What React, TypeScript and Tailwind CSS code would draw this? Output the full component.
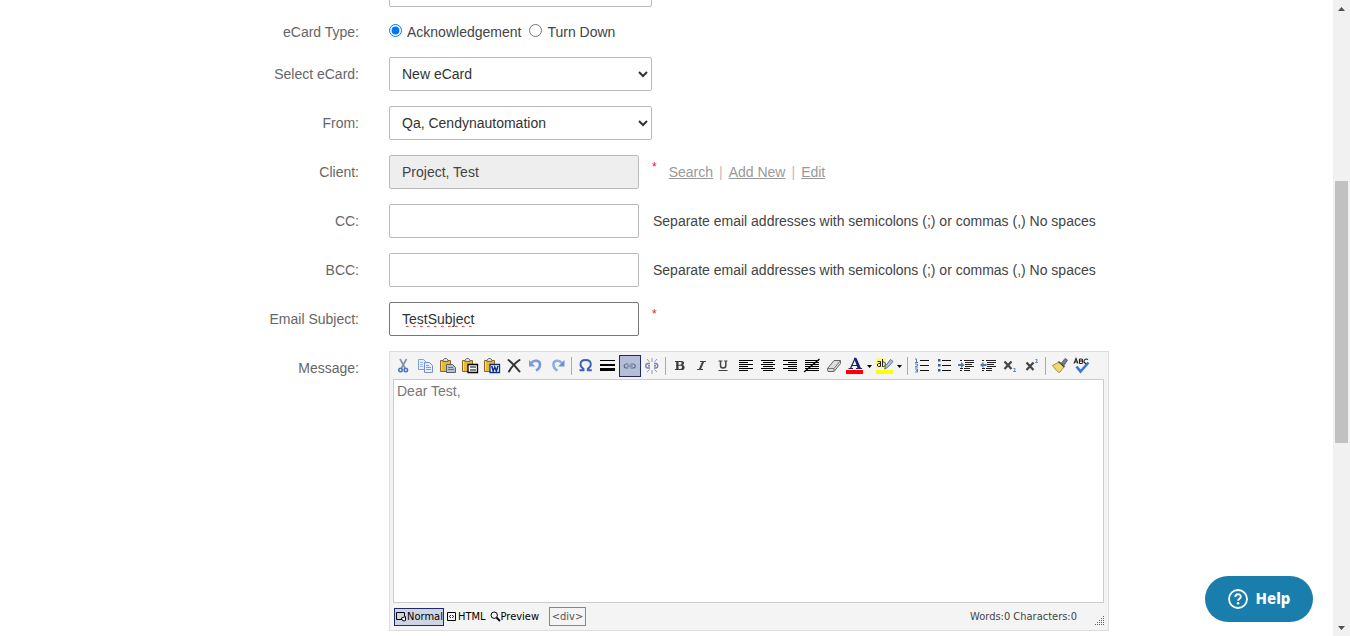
import { useState, type ReactNode } from "react";

const fieldClass =
  "h-[34px] w-[250px] rounded-[2px] border border-[#bbb] bg-white px-3 text-sm text-[#333] outline-none";
const selectClass =
  "h-[34px] w-[263px] rounded-[2px] border border-[#bbb] bg-white px-2 text-sm text-[#333] outline-none";

function Row({ label, htmlFor, children }: { label: string; htmlFor?: string; children: ReactNode }) {
  return (
    <div className="grid grid-cols-4">
      <label htmlFor={htmlFor} className="flex min-h-5 justify-end pr-[15px] pt-[7px] leading-5 text-[#666]">
        {label}
      </label>
      <div className="col-span-3 flex items-center pl-[15px]">{children}</div>
    </div>
  );
}

function Required() {
  return <span className="self-start pl-[13px] pt-1 text-xs leading-4 text-[#e02020]">*</span>;
}

function Tool({
  name,
  children,
  active = false,
}: {
  name: string;
  children: ReactNode;
  active?: boolean;
}) {
  return (
    <button
      type="button"
      title={name}
      aria-label={name}
      className={
        active
          ? "size-[22px] shrink-0 border border-[#1c2a6b] bg-[#b5bed6]"
          : "size-[22px] shrink-0 border border-transparent hover:bg-[#dfe3ee]"
      }
    >
      <svg viewBox="0 0 20 20" className="size-5" fill="none">
        {children}
      </svg>
    </button>
  );
}

function DropArrow({ name }: { name: string }) {
  return (
    <button type="button" aria-label={name} className="flex h-[22px] w-2 shrink-0 items-center">
      <svg viewBox="0 0 5 3" className="h-[3px] w-[5px]">
        <path d="M0 0h5L2.500 3z" fill="#000" />
      </svg>
    </button>
  );
}

function Separator() {
  return (
    <span className="flex w-[6px] shrink-0 pl-0.5">
      <span className="h-[18px] w-px bg-[#aaa]" />
    </span>
  );
}

function Clipboard() {
  return (
    <>
      <path d="M2.500 4.500h10v11h-10z" fill="#e8b83e" stroke="#8a6a20" />
      <path d="M3.500 5.500v9" stroke="#f8dc80" />
      <path d="M5 5.500V4l1.500-1.500h2L10 4v1.500z" fill="#d8d8d8" stroke="#555" strokeWidth=".8" />
    </>
  );
}

function Lines({ rows }: { rows: [number, number][] }) {
  return (
    <>
      {rows.map(([x, w], i) => (
        <rect key={i} x={x} y={4 + i * 2} width={w} height={1} fill="#000" />
      ))}
    </>
  );
}

function ListLines() {
  return <path d="M8 4.500h9M8 9.500h9M8 14.500h9" stroke="#111" />;
}

function IndentLines() {
  return (
    <path
      d="M4 4.500h2M8 4.500h10M9 6.500h9M9 8.500h7M9 10.500h9M4 12.500h3M8 12.500h6M4 14.500h2M8 14.500h6"
      stroke="#222"
      strokeWidth="1.200"
    />
  );
}

function Toolbar() {
  return (
    <div className="flex h-[27px] items-center pl-[3px] pt-px">
      <Tool name="Cut">
        <path d="M6 3l5 9M12.500 3l-5 9" stroke="#8592aa" strokeWidth="1.700" />
        <circle cx="6.500" cy="14" r="1.700" stroke="#4777bd" strokeWidth="1.600" />
        <circle cx="11.800" cy="14" r="1.700" stroke="#4777bd" strokeWidth="1.600" />
      </Tool>
      <Tool name="Copy">
        <path d="M2.500 3.500h5l3 3v7h-8z" fill="#e6eefb" stroke="#7f9fd3" />
        <path d="M4 6.500h3M4 8.500h3M4 10.500h3" stroke="#9db7e0" />
        <path d="M8.500 6.500h5l3 3v7h-8z" fill="#e6eefb" stroke="#7592cc" />
        <path d="M10 9.500h3M10 11.500h5M10 13.500h5" stroke="#7f9fd3" />
      </Tool>
      <Tool name="Paste">
        <Clipboard />
        <path d="M8.500 8.500h6l3 3v5h-9z" fill="#b9bfcb" stroke="#58606e" />
        <path d="M10 11.500h5M10 13.500h6" stroke="#69717f" />
      </Tool>
      <Tool name="Paste as plain text">
        <Clipboard />
        <path d="M8 8.500h9.500v8H8z" fill="#fff" stroke="#000" strokeWidth="1.300" />
        <path d="M10 11h6M10 14h6" stroke="#000" />
      </Tool>
      <Tool name="Paste from Word">
        <Clipboard />
        <path d="M8 8.500h9.500v8H8z" fill="#fff" stroke="#102e86" strokeWidth="1.300" />
        <path d="M9.700 10l1.500 5 1.600-4 1.600 4 1.500-5" stroke="#102e86" strokeWidth="1.500" />
      </Tool>
      <Tool name="Delete">
        <path
          d="M4.500 4c4 3 7.500 7 11 11.500M15.500 4C11 7 7.500 11 5 15.500"
          stroke="#333"
          strokeWidth="2"
          strokeLinecap="round"
        />
      </Tool>
      <Tool name="Undo">
        <path d="M5 7c3-3.500 9-3 9 1.500 0 3-2 5-4 6" stroke="#7c9bd6" strokeWidth="2.600" />
        <path d="M3 4v6.500h6.500z" fill="#7c9bd6" />
      </Tool>
      <Tool name="Redo">
        <path d="M14 7c-3-3.500-8.500-3-8.500 1.500 0 3 2 5 4 6" stroke="#8caee0" strokeWidth="2.600" />
        <path d="M16.500 4v6.500H10z" fill="#6f93d0" />
      </Tool>
      <Separator />
      <Tool name="Insert special character">
        <path
          d="M3.500 14.200h4v-1.400C5.500 11.700 4.500 10 4.500 8.200 4.500 5.500 6.700 4 9.600 4s5.200 1.500 5.200 4.200c0 1.800-1 3.500-3 4.600v1.400h4"
          stroke="#3a62b8"
          strokeWidth="1.900"
        />
      </Tool>
      <Tool name="Insert horizontal rule">
        <path d="M2 4h15v1H2zM2 8h15v2H2zM2 12h15v3H2z" fill="#000" />
      </Tool>
      <Tool name="Insert link" active>
        <path
          d="M8.500 8H6.500C3.500 8 3.500 12 6.500 12h2M10.500 8h2.500c3 0 3 4 0 4h-2.500M7 10h5.500"
          stroke="#5d6e94"
          strokeWidth="1.200"
        />
      </Tool>
      <Tool name="Remove link">
        <path
          d="M8 7.500H6C3 7.500 3 12 6 12h2M12 7.500h1.500c3 0 3 4.500 0 4.500H12M6 9.800h2M12 9.800h2"
          stroke="#7384aa"
          strokeWidth="1.400"
        />
        <path d="M10 2v4M10 14v4M5 3l2.500 3M15 3l-2.500 3M5 16l2.500-2.500M15 16l-2.500-2.500" stroke="#8d9ab7" />
      </Tool>
      <Separator />
      <Tool name="Bold">
        <path
          d="M5 5h6.200c2.300 0 2.900 1 2.900 2.100 0 1-.6 1.700-1.700 2 1.400.2 2.200 1 2.200 2.300 0 1.600-1.100 2.600-3.300 2.600H5v-1h1.200V6H5zM8.500 6v2.700h1.600c1 0 1.500-.4 1.500-1.400S11.100 6 10.100 6zM8.500 9.700V13h1.800c1.200 0 1.700-.5 1.700-1.700s-.6-1.600-1.700-1.600z"
          fill="#3c3c3c"
          fillRule="evenodd"
        />
      </Tool>
      <Tool name="Italic">
        <path d="M8 5.500h6M5 13.500h6" stroke="#444" />
        <path d="M11.200 5.500l-3.400 8" stroke="#444" strokeWidth="2" />
      </Tool>
      <Tool name="Underline">
        <path d="M4.500 5h4M10 5h3.500" stroke="#444" />
        <path d="M6.500 5v4.500c0 3.300 5.300 3.300 5.300 0V5" stroke="#444" strokeWidth="1.500" />
        <path d="M4.500 14.500h9" stroke="#444" />
      </Tool>
      <Tool name="Align left">
        <Lines rows={[[3, 14], [3, 9], [3, 14], [3, 9], [3, 14], [3, 9]]} />
      </Tool>
      <Tool name="Align center">
        <Lines rows={[[3, 14], [5, 10], [3, 14], [5, 10], [3, 14], [5, 10]]} />
      </Tool>
      <Tool name="Align right">
        <Lines rows={[[3, 14], [8, 9], [3, 14], [8, 9], [3, 14], [8, 9]]} />
      </Tool>
      <Tool name="Remove alignment">
        <Lines rows={[[3, 14], [3, 14], [3, 14], [3, 14], [3, 14], [3, 14]]} />
        <path d="M2 16L17.500 3" stroke="#000" strokeWidth="1.300" />
      </Tool>
      <Tool name="Remove format">
        <path d="M3.500 12.500L10 4.500h6.500v3l-6.500 8H4z" fill="#ddd" stroke="#666" />
        <path d="M3.500 12.500H10l6.500-8M10 12.500v3" fill="none" stroke="#777" />
      </Tool>
      <Tool name="Font color">
        <path d="M4.500 12.500L9 2.500l5 10M6 9.500h6" stroke="#17236e" strokeWidth="1.200" />
        <path d="M8 2h2.500l4.500 10.500h-3.300zM2.500 12H7v1H2.500zM10 12h6v1h-6z" fill="#17236e" />
        <path d="M0 14h17v4H0z" fill="#f00" />
      </Tool>
      <DropArrow name="Choose font color" />
      <Tool name="Highlight">
        <path d="M0 2h10v10H0z" fill="#fafa8c" />
        <path
          d="M1.500 5.500h3v5h-2c-1.500 0-1.500-3 0-3h2M6.500 3v7.500h1.200c2.200 0 2.200-4.500 0-4.500H6.500"
          stroke="#222"
        />
        <path d="M8.500 13l1.500-3.500L14.500 3.500l2.500 2-5.500 6z" fill="#b7c5dc" stroke="#52658b" strokeWidth=".9" />
        <path d="M0 14h17v4H0z" fill="#ff0" />
      </Tool>
      <DropArrow name="Choose highlight color" />
      <Separator />
      <Tool name="Numbered list">
        <ListLines />
        <path
          d="M3 3h1.500v3M3 6.500h3M3 8h2.500v1.500L3 11h3M3 13h2.500v3H3M4 14.500h1.500"
          stroke="#4a70ad"
          strokeWidth=".9"
        />
      </Tool>
      <Tool name="Bulleted list">
        <ListLines />
        <path d="M4 3h2.500v2.500H4zM4 8h2.500v2.500H4zM4 13h2.500v2.500H4z" fill="#385d9b" />
      </Tool>
      <Tool name="Increase indent">
        <IndentLines />
        <path d="M2 8h3V6l3.500 3L5 12v-2H2z" fill="#5379b6" />
      </Tool>
      <Tool name="Decrease indent">
        <IndentLines />
        <path d="M8.500 8h-3V6L2 9l3.500 3v-2h3z" fill="#5379b6" />
      </Tool>
      <Tool name="Subscript">
        <path d="M4.500 5.500l7 7.500M11.500 5.500l-7 7.500" stroke="#444" strokeWidth="2.200" />
        <path d="M13.500 12.500H15V14l-1.500 1.500H16" stroke="#5379b6" strokeWidth=".9" />
      </Tool>
      <Tool name="Superscript">
        <path d="M4.500 6.500l7 7.500M11.500 6.500l-7 7.500" stroke="#444" strokeWidth="2.200" />
        <path d="M13.500 3.500H15V5l-1.500 1.500H16" stroke="#5379b6" strokeWidth=".9" />
      </Tool>
      <Separator />
      <Tool name="Format painter">
        <path d="M11.500 7L15 2.500l2.500 1.500-3.500 5.500z" fill="#6c7f9f" stroke="#45536c" strokeWidth=".8" />
        <path d="M2.500 9.500L9 6l5 5-4.500 5.500c-2-.5-4-3-7-7z" fill="#f0d873" stroke="#a38432" strokeWidth=".9" />
        <path d="M8.500 5.500l6 5.500" stroke="#4b4638" strokeWidth="1.500" />
      </Tool>
      <Tool name="Spell check">
        <path
          d="M2 7.500l2-5 2 5M3 6h2.500M7.500 3v4.500M7.500 3h2c1.500 0 1.500 2 0 2h-2M9.500 5c1.800 0 1.800 2.500 0 2.500h-2M16 3.500c-1.500-1-4-.5-4 1.700s2.500 3 4 1.800"
          stroke="#222"
          strokeWidth="1.100"
        />
        <path d="M4.500 10.500l4 5 8-9" stroke="#3975d6" strokeWidth="2.600" />
      </Tool>
    </div>
  );
}

const modeText = "font-['DejaVu_Sans_Condensed','Noto_Sans',sans-serif] text-[11px] leading-4";

function StatusBar() {
  return (
    <div className={"flex h-[27px] items-center pl-1 pr-[3px] text-black " + modeText}>
      <button
        type="button"
        className="flex h-[18px] w-[50px] items-center justify-center border border-[#1c2a6b] bg-[#ced4e2]"
      >
        <svg viewBox="0 0 12 12" className="size-3 shrink-0" fill="none" stroke="#000">
          <path d="M7 8.500H1.500v-7h8V5" />
          <path d="M6.500 7l4-1.500v4l-1.500.500-2-1z" fill="#fff" />
        </svg>
        Normal
      </button>
      <button type="button" className="ml-[3px] flex items-center gap-0.5">
        <svg viewBox="0 0 9 9" className="size-[9px] shrink-0" fill="none" stroke="#000">
          <path d="M.5.5h8v8h-8z" />
          <path d="M3.800 3L2.500 4.500 3.800 6M5.200 3l1.300 1.500L5.200 6" strokeWidth=".9" />
        </svg>
        HTML
      </button>
      <button type="button" className="ml-1 flex items-center">
        <svg viewBox="0 0 11 11" className="size-[11px] shrink-0" fill="none" stroke="#000">
          <circle cx="4.200" cy="4.200" r="3.200" />
          <path d="M6.500 6.500L10 10" strokeWidth="1.800" />
        </svg>
        Preview
      </button>
      <button
        type="button"
        className="ml-[10px] h-[19px] w-[37px] border border-[#888] text-center leading-4 text-[#555]"
      >
        &lt;div&gt;
      </button>
      <span className="ml-auto text-[#444]">Words:0 Characters:0</span>
      <svg viewBox="0 0 10 10" className="ml-[18px] mt-2 size-[10px] shrink-0" fill="#1f6fc8" shapeRendering="crispEdges">
        <path d="M8 0h1v1H8zM6 2h1v1H6zM8 2h1v1H8zM4 4h1v1H4zM6 4h1v1H6zM8 4h1v1H8zM2 6h1v1H2zM4 6h1v1H4zM6 6h1v1H6zM8 6h1v1H8zM0 8h1v1H0zM2 8h1v1H2zM4 8h1v1H4zM6 8h1v1H6zM8 8h1v1H8z" />
      </svg>
    </div>
  );
}

function Scrollbar() {
  return (
    <div aria-hidden="true" className="flex w-[17px] shrink-0 flex-col items-center bg-[#f1f1f1]">
      <span className="flex h-[17px] items-center">
        <svg viewBox="0 0 7 4" className="h-1 w-[7px]">
          <path d="M0 4h7L3.500 0z" fill="#505050" />
        </svg>
      </span>
      <span className="flex-[164]" />
      <span className="w-[13px] flex-[262] bg-[#c1c1c1]" />
      <span className="flex-[176]" />
      <span className="flex h-[17px] items-center">
        <svg viewBox="0 0 7 4" className="h-1 w-[7px]">
          <path d="M0 0h7L3.500 4z" fill="#505050" />
        </svg>
      </span>
    </div>
  );
}

export default function App() {
  const [kind, setKind] = useState("ack");
  const link = "text-[#999] underline";

  return (
    <div className="flex h-screen bg-white font-['Liberation_Sans',Arial,sans-serif] text-sm text-[#444]">
      <main className="min-w-0 flex-1 overflow-hidden">
        <form className="mx-auto -mt-[27px] flex max-w-[1170px] flex-col gap-[15px]">
          <div className="grid grid-cols-4">
            <div className="col-span-3 col-start-2 flex pl-[15px]">
              <input aria-label="Name" className="h-[34px] w-[263px] rounded-[2px] border border-[#bbb] px-3" />
            </div>
          </div>

          <div className="grid grid-cols-4 leading-5">
            <span id="ecard-type" className="pr-[15px] text-right text-[#666]">
              eCard Type:
            </span>
            <div role="radiogroup" aria-labelledby="ecard-type" className="col-span-3 flex gap-2 pl-[15px]">
              <label className="flex gap-[5px]">
                <input
                  type="radio"
                  name="type"
                  className="mt-0.5 size-[13px]"
                  checked={kind === "ack"}
                  onChange={() => setKind("ack")}
                />
                Acknowledgement
              </label>
              <label className="flex gap-[5px]">
                <input
                  type="radio"
                  name="type"
                  className="mt-0.5 size-[13px]"
                  checked={kind === "turn"}
                  onChange={() => setKind("turn")}
                />
                Turn Down
              </label>
            </div>
          </div>

          <Row label="Select eCard:" htmlFor="ecard">
            <select id="ecard" className={selectClass}>
              <option>New eCard</option>
            </select>
          </Row>
          <Row label="From:" htmlFor="from">
            <select id="from" className={selectClass}>
              <option>Qa, Cendynautomation</option>
            </select>
          </Row>
          <Row label="Client:" htmlFor="client">
            <input
              id="client"
              readOnly
              value="Project, Test"
              className="h-[34px] w-[250px] rounded-[2px] border border-[#bbb] bg-[#eee] px-3 text-sm text-[#444] outline-none"
            />
            <Required />
            <div className="flex gap-[6px] pl-3 text-[#bbb]">
              <a href="#search" className={link}>Search</a>
              <span>|</span>
              <a href="#add" className={link}>Add New</a>
              <span>|</span>
              <a href="#edit" className={link}>Edit</a>
            </div>
          </Row>
          <Row label="CC:" htmlFor="cc">
            <input id="cc" className={fieldClass} />
            <span className="pl-[14px]">Separate email addresses with semicolons (;) or commas (,) No spaces</span>
          </Row>
          <Row label="BCC:" htmlFor="bcc">
            <input id="bcc" className={fieldClass} />
            <span className="pl-[14px]">Separate email addresses with semicolons (;) or commas (,) No spaces</span>
          </Row>
          <Row label="Email Subject:" htmlFor="subject">
            <input
              id="subject"
              defaultValue="TestSubject"
              className="h-[34px] w-[250px] rounded-[2px] border border-[#777] bg-white px-3 text-sm leading-6 text-[#333] underline decoration-[#e02020] decoration-wavy decoration-1 underline-offset-1 outline-none [text-decoration-skip-ink:none]"
            />
            <Required />
          </Row>
          <Row label="Message:" htmlFor="message">
            <div className="w-[720px] border border-[#ddd] bg-[#f4f4f4]">
              <Toolbar />
              <div className="pl-[3px] pr-1">
                <textarea
                  id="message"
                  defaultValue="Dear Test,"
                  className="block h-[224px] w-full resize-none border border-[#ccc] bg-white px-[3px] py-px text-sm leading-5 text-[#777] outline-none"
                />
              </div>
              <StatusBar />
            </div>
          </Row>
        </form>
      </main>
      <Scrollbar />
      <button
        type="button"
        className="fixed bottom-[14px] right-[37px] flex h-[46px] w-[108px] items-center justify-center gap-2 rounded-full bg-[#1a7eac] font-['Noto_Sans',sans-serif] text-[15px] font-extrabold text-white"
      >
        <svg viewBox="0 0 20 20" className="size-5" fill="none" stroke="#fff" strokeWidth="1.800">
          <circle cx="10" cy="10" r="9" />
          <path d="M7.300 8c0-3.700 5.500-3.500 5.500-.3 0 2-2.700 2-2.700 4" />
          <circle cx="10.100" cy="14.300" r="1.200" fill="#fff" stroke="none" />
        </svg>
        Help
      </button>
    </div>
  );
}
